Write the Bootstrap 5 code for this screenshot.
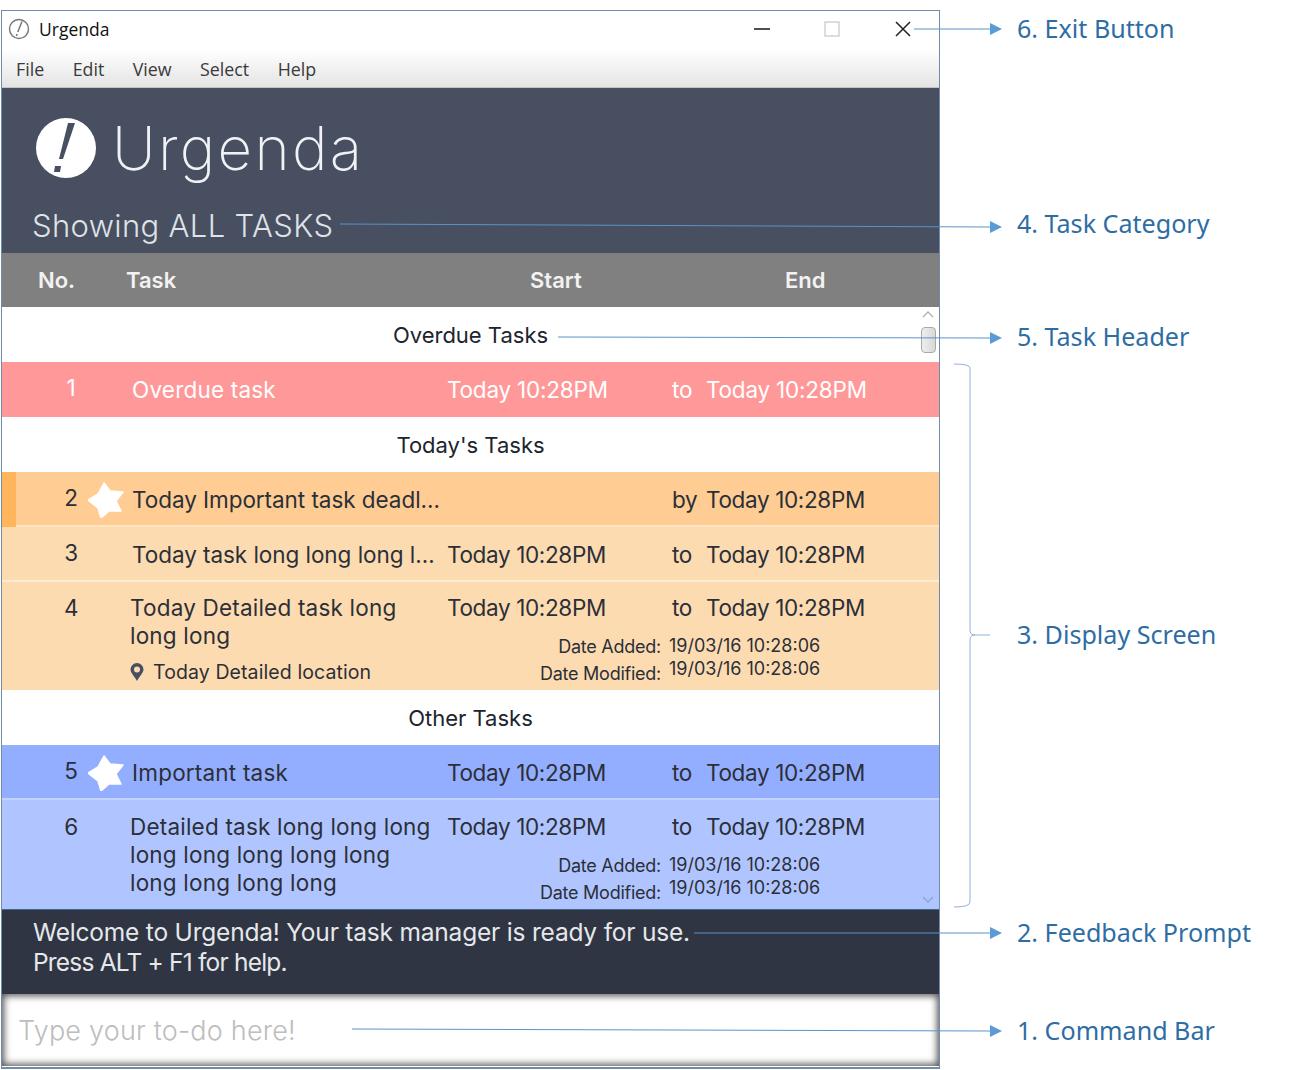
<!DOCTYPE html>
<html lang="en">
<head>
  <meta charset="UTF-8" />
  <title>Urgenda</title>
  <link href="https://cdn.jsdelivr.net/npm/bootstrap@5.3.2/dist/css/bootstrap.min.css" rel="stylesheet" />
  <style>
    body { background: #fff; font-family: Inter, "Liberation Sans", sans-serif; color: #2b2f38; width: 1298px; height: 1070px; overflow: hidden; position: relative; }
    .app-window { width: 939px; height: 1059px; margin: 10px 0 0 1px; border: 1px solid #6f8da8; border-bottom-width: 2px; }
    .title-bar { height: 41px; background: #fff; font-family: "Open Sans", sans-serif; font-size: 17.5px; color: #111; padding: 0 0 5px 6px; }
    .title-text { margin-left: 9px; }
    .win-btn { width: 70px; }
    .win-btn-last { width: 72px; }
    .menu-bar { height: 36px; background: linear-gradient(#fdfdfd, #e4e4e4); border-bottom: 1px solid #c4c4c4; font-family: "Open Sans", sans-serif; font-size: 17.8px; color: #3a3a3a; padding-left: 14px; gap: 28.5px; }
    .banner { height: 165px; background: #474f60; color: #f0f2f5; padding-left: 31px; }
    .logo-row { height: 120px; gap: 15px; }
    .logo-mark { margin-left: 2px; }
    .app-name { font-size: 60px; font-weight: 200; letter-spacing: 2.3px; }
    .category { font-size: 31px; font-weight: 300; color: #dfe2e7; line-height: 1; margin: 2px 0 0 -1px; letter-spacing: .35px; }
    .col-head { height: 54px; background: #808080; color: #f2f2f2; font-size: 22px; font-weight: 600; }
    .head-no { width: 124px; padding-left: 36px; }
    .head-task { width: 404px; }
    .head-start { width: 255px; }
    .task-pane { height: 602px; position: relative; }
    .group-title { height: 55px; font-size: 22px; background: #fff; color: #20242c; padding-top: 1px; }
    .task-line { height: 55px; font-size: 22.5px; letter-spacing: -.35px; box-shadow: inset 0 -2px rgba(255,255,255,.45); }
    .task-line.tall-a { height: 108px; box-shadow: none; }
    .task-line.tall-b { height: 109px; box-shadow: none; padding-top: 13px; }
    .is-overdue { background: #ff9999; color: #fff; box-shadow: none; letter-spacing: -.2px; }
    .is-today-star { background: #ffcd93; }
    .is-today { background: #fddbb0; }
    .is-other-star { background: #94aeff; }
    .is-other { background: #b0c5ff; }
    .side-mark { width: 14px; flex: none; align-self: stretch; }
    .is-today-star .side-mark { background: #ffb55c; }
    .num-cell { width: 116px; flex: none; padding-left: 45px; gap: 7px; }
    .num-text { width: 20px; text-align: center; margin-top: -3px; }
    .tall-top .num-text { margin-top: 0; }
    .task-cell { width: 315px; flex: none; white-space: nowrap; overflow: hidden; letter-spacing: .2px; }
    .cut-text { letter-spacing: -.05px; }
    .tall-cell { margin-left: -2px; width: 317px; }
    .start-cell { width: 225px; flex: none; }
    .word-cell { width: 34px; flex: none; }
    .tall-top { padding-top: 12px; line-height: 28px; }
    .place-line { font-size: 19.5px; line-height: 24px; margin-top: 10px; gap: 9px; letter-spacing: .1px; }
    .stamp-box { font-size: 18px; line-height: 24px; margin-top: 13px; }
    .stamp-label { width: 214px; text-align: right; margin-right: 8px; letter-spacing: -.25px; }
    .stamp-value { letter-spacing: 0; margin-top: -1px; }
    .stamp-row + .stamp-row { margin-top: 3px; }
    .stamp-row + .stamp-row .stamp-value { margin-top: -5px; }
    .scroll-rail { position: absolute; top: 0; right: 3px; width: 16px; height: 602px; }
    .scroll-thumb { position: absolute; top: 20px; left: 1px; width: 15px; height: 26px; border: 1px solid #a9a9a9; border-radius: 4px; background: linear-gradient(90deg, #eee, #d8d8d8); }
    .scroll-down { position: absolute; bottom: 3px; left: 0; }
    .feedback { height: 85px; background: #2f3542; color: #e6e8ec; font-size: 24.5px; line-height: 30px; padding: 7px 0 0 31px; letter-spacing: -.2px; border-top: 1px solid #3d6a8c; }
    .feedback-help { letter-spacing: -.8px; }
    .command-wrap { height: 72px; background: #fff; box-shadow: inset 0 0 7px 2px #555; padding: 0 16px; }
    .command-input { border: 0; background: transparent; box-shadow: none; padding: 0; font-size: 27px; font-family: Inter, sans-serif; font-weight: 300; height: 100%; letter-spacing: .2px; }
    .command-input::placeholder { color: #bdbdbd; }
    .note-layer { position: absolute; left: 0; top: 0; pointer-events: none; }
    .note-label { position: absolute; left: 1017px; font-family: "Noto Sans", sans-serif; font-size: 25.1px; color: #2e6da4; line-height: 30px; white-space: nowrap; }
    .at-6 { top: 13px; } .at-4 { top: 208px; } .at-5 { top: 321px; } .at-3 { top: 619px; } .at-2 { top: 917px; } .at-1 { top: 1015px; }
  </style>
</head>
<body>

  <div class="app-window d-flex flex-column">
    <!-- Title bar -->
    <div class="title-bar d-flex align-items-center">
      <svg width="22" height="22" viewBox="0 0 22 22"><circle cx="11" cy="11" r="9.5" fill="none" stroke="#777" stroke-width="1.4"/><path d="M14 3.500 9.800 14M9 16 8.500 18" stroke="#777" stroke-width="1.5" fill="none"/></svg>
      <span class="title-text">Urgenda</span>
      <div class="ms-auto d-flex">
        <div class="win-btn d-flex justify-content-center"><svg width="18" height="18" viewBox="0 0 18 18"><path d="M1 9H17" stroke="#222" stroke-width="1.6"/></svg></div>
        <div class="win-btn d-flex justify-content-center"><svg width="18" height="18" viewBox="0 0 18 18"><rect x="2" y="2" width="14" height="14" fill="none" stroke="#cfcfcf" stroke-width="1.4"/></svg></div>
        <div class="win-btn win-btn-last d-flex justify-content-center"><svg width="18" height="18" viewBox="0 0 18 18"><path d="M2 2 16 16M16 2 2 16" stroke="#222" stroke-width="1.5"/></svg></div>
      </div>
    </div>

    <!-- Menu -->
    <div class="menu-bar d-flex align-items-center">
      <span>File</span><span>Edit</span><span>View</span><span>Select</span><span>Help</span>
    </div>

    <!-- Banner -->
    <div class="banner">
      <div class="logo-row d-flex align-items-center">
        <svg width="62" height="62" viewBox="0 0 62 62" class="logo-mark"><circle cx="31" cy="31" r="30" fill="#fff"/><path d="M33 6 40 6 28 42 24 42ZM20 49 26 49 25 55 19 55Z" fill="#474f60"/></svg>
        <span class="app-name">Urgenda</span>
      </div>
      <div class="category">Showing ALL TASKS</div>
    </div>

    <!-- Column heads -->
    <div class="col-head d-flex align-items-center">
      <div class="head-no">No.</div>
      <div class="head-task">Task</div>
      <div class="head-start">Start</div>
      <div>End</div>
    </div>

    <!-- Task list -->
    <div class="task-pane">
      <div class="group-title d-flex align-items-center justify-content-center">Overdue Tasks</div>
      <div class="task-line is-overdue d-flex align-items-center">
        <div class="side-mark"></div>
        <div class="num-cell d-flex align-items-center"><span class="num-text">1</span></div>
        <div class="task-cell">Overdue task</div>
        <div class="start-cell">Today 10:28PM</div>
        <div class="word-cell">to</div>
        <div>Today 10:28PM</div>
      </div>

      <div class="group-title d-flex align-items-center justify-content-center">Today's Tasks</div>
      <div class="task-line is-today-star d-flex align-items-center">
        <div class="side-mark"></div>
        <div class="num-cell d-flex align-items-center"><span class="num-text">2</span>
          <svg width="36" height="36" viewBox="0 0 36 36"><path d="M16 1 22 9 35 10 28 19 33 29 21 29 13 36 10 26 0 18 10 12Z" fill="#fff" stroke="#fff" stroke-width="1.500" stroke-linejoin="round"/></svg></div>
        <div class="task-cell cut-text">Today Important task deadl…</div>
        <div class="start-cell"></div>
        <div class="word-cell">by</div>
        <div>Today 10:28PM</div>
      </div>
      <div class="task-line is-today d-flex align-items-center">
        <div class="side-mark"></div>
        <div class="num-cell d-flex align-items-center"><span class="num-text">3</span></div>
        <div class="task-cell cut-text">Today task long long long l…</div>
        <div class="start-cell">Today 10:28PM</div>
        <div class="word-cell">to</div>
        <div>Today 10:28PM</div>
      </div>
      <div class="task-line tall-a is-today d-flex align-items-start tall-top">
        <div class="side-mark"></div>
        <div class="num-cell d-flex"><span class="num-text">4</span></div>
        <div class="task-cell tall-cell">
          <div>Today Detailed task long<br>long long</div>
          <div class="place-line d-flex align-items-center">
            <svg width="14" height="18" viewBox="0 0 14 18"><path d="M7 0a6.500 6.500 0 0 1 6.500 6.500C13.500 10 9 14 7 18 5 14 .5 10 .5 6.500A6.500 6.500 0 0 1 7 0Z" fill="#474f60"/><circle cx="7" cy="6.500" r="3" fill="#fddbb0"/></svg>
            <span>Today Detailed location</span>
          </div>
        </div>
        <div class="flex-grow-1">
          <div class="d-flex">
            <div class="start-cell">Today 10:28PM</div>
            <div class="word-cell">to</div>
            <div>Today 10:28PM</div>
          </div>
          <div class="stamp-box">
            <div class="stamp-row d-flex"><span class="stamp-label">Date Added:</span><span class="stamp-value">19/03/16 10:28:06</span></div>
            <div class="stamp-row d-flex"><span class="stamp-label">Date Modified:</span><span class="stamp-value">19/03/16 10:28:06</span></div>
          </div>
        </div>
      </div>

      <div class="group-title d-flex align-items-center justify-content-center">Other Tasks</div>
      <div class="task-line is-other-star d-flex align-items-center">
        <div class="side-mark"></div>
        <div class="num-cell d-flex align-items-center"><span class="num-text">5</span>
          <svg width="36" height="36" viewBox="0 0 36 36"><path d="M16 1 22 9 35 10 28 19 33 29 21 29 13 36 10 26 0 18 10 12Z" fill="#fff" stroke="#fff" stroke-width="1.500" stroke-linejoin="round"/></svg></div>
        <div class="task-cell">Important task</div>
        <div class="start-cell">Today 10:28PM</div>
        <div class="word-cell">to</div>
        <div>Today 10:28PM</div>
      </div>
      <div class="task-line tall-b is-other d-flex align-items-start tall-top">
        <div class="side-mark"></div>
        <div class="num-cell d-flex"><span class="num-text">6</span></div>
        <div class="task-cell tall-cell">
          <div>Detailed task long long long<br>long long long long long<br>long long long long</div>
        </div>
        <div class="flex-grow-1">
          <div class="d-flex">
            <div class="start-cell">Today 10:28PM</div>
            <div class="word-cell">to</div>
            <div>Today 10:28PM</div>
          </div>
          <div class="stamp-box">
            <div class="stamp-row d-flex"><span class="stamp-label">Date Added:</span><span class="stamp-value">19/03/16 10:28:06</span></div>
            <div class="stamp-row d-flex"><span class="stamp-label">Date Modified:</span><span class="stamp-value">19/03/16 10:28:06</span></div>
          </div>
        </div>
      </div>

      <!-- Scrollbar sits over the list -->
      <div class="scroll-rail">
        <svg width="16" height="12" viewBox="0 0 16 12" class="d-block"><path d="M3 10 8 5 13 10" fill="none" stroke="#b5b5b5" stroke-width="1.500"/></svg>
        <div class="scroll-thumb"></div>
        <svg width="16" height="12" viewBox="0 0 16 12" class="scroll-down"><path d="M3 3 8 8 13 3" fill="none" stroke="#93a5c9" stroke-width="1.500"/></svg>
      </div>
    </div>

    <!-- Feedback -->
    <div class="feedback">Welcome to Urgenda! Your task manager is ready for use.<br><span class="feedback-help">Press ALT + F1 for help.</span></div>

    <!-- Command bar -->
    <div class="command-wrap">
      <input class="form-control command-input" type="text" placeholder="Type your to-do here!" />
    </div>
  </div>

  <!-- Callouts drawn over the window -->
  <svg class="note-layer" width="1298" height="1070" viewBox="0 0 1298 1070">
    <defs><marker id="tip" markerUnits="userSpaceOnUse" markerWidth="12" markerHeight="12" refX="0" refY="6" orient="auto"><path d="M0 0 12 6 0 12Z" fill="#5b9bd5"/></marker></defs>
    <g fill="none" stroke="#5b93c9" stroke-width="1">
      <path d="M914 29H990" marker-end="url(#tip)"/>
      <path d="M340 224 990 227" marker-end="url(#tip)"/>
      <path d="M558 337 990 338" marker-end="url(#tip)"/>
      <path d="M694 933H990" marker-end="url(#tip)"/>
      <path d="M352 1029 990 1031" marker-end="url(#tip)"/>
      <path d="M954 364Q970 364 970 368V630Q970 635 975 635H990M975 635Q970 635 970 640V902Q970 907 954 907" stroke="#8fb2d9"/>
    </g>
  </svg>
  <div class="note-label at-6">6. Exit Button</div>
  <div class="note-label at-4">4. Task Category</div>
  <div class="note-label at-5">5. Task Header</div>
  <div class="note-label at-3">3. Display Screen</div>
  <div class="note-label at-2">2. Feedback Prompt</div>
  <div class="note-label at-1">1. Command Bar</div>

  <script src="https://cdn.jsdelivr.net/npm/bootstrap@5.3.2/dist/js/bootstrap.bundle.min.js"></script>
</body>
</html>
